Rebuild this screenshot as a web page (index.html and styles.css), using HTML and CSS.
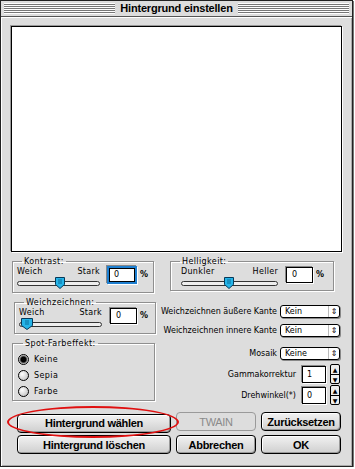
FILE: index.html
```html
<!DOCTYPE html>
<html>
<head>
  <link rel="stylesheet" href="styles.css">
</head>
<body>

  <div class="window">
    <div class="titlebar">
      <div class="stripes"><span class="title">Hintergrund einstellen</span></div>
    </div>

    <div class="content">
      <div class="preview"></div>

      <div class="controls">
        <div class="col-left">
          <fieldset class="group kontrast">
            <legend>Kontrast:</legend>
            <div class="slider-row">
              <div class="slider">
                <div class="slider-labels"><span>Weich</span><span>Stark</span></div>
                <div class="track">
                  <svg class="thumb" style="left: 37px" width="10" height="12" viewBox="0 0 10 12">
                    <path d="M0.5 0.5h9v7l-4.5 4-4.5-4z" fill="#25b4e8" stroke="#063a5a"/>
                    <path d="M4 2v5M6 2v5" stroke="#0a6f9c"/>
                  </svg>
                </div>
              </div>
              <div class="num focused">0</div>
              <span class="pct">%</span>
            </div>
          </fieldset>

          <fieldset class="group weich">
            <legend>Weichzeichnen:</legend>
            <div class="slider-row">
              <div class="slider">
                <div class="slider-labels"><span>Weich</span><span>Stark</span></div>
                <div class="track">
                  <svg class="thumb" style="left: 1px" width="12" height="12" viewBox="0 0 12 12">
                    <path d="M0.5 0.5h11v7l-5.5 4-5.5-4z" fill="#25b4e8" stroke="#063a5a"/>
                    <path d="M5 2v5M7 2v5" stroke="#0a6f9c"/>
                  </svg>
                </div>
              </div>
              <div class="num">0</div>
              <span class="pct">%</span>
            </div>
          </fieldset>

          <fieldset class="group spot">
            <legend>Spot-Farbeffekt:</legend>
            <label class="radio"><span class="dot checked"></span>Keine</label>
            <label class="radio"><span class="dot"></span>Sepia</label>
            <label class="radio"><span class="dot"></span>Farbe</label>
          </fieldset>
        </div>

        <div class="col-right">
          <fieldset class="group hell">
            <legend>Helligkeit:</legend>
            <div class="slider-row">
              <div class="slider wide">
                <div class="slider-labels"><span>Dunkler</span><span>Heller</span></div>
                <div class="track">
                  <svg class="thumb" style="left: 42px" width="10" height="12" viewBox="0 0 10 12">
                    <path d="M0.5 0.5h9v7l-4.5 4-4.5-4z" fill="#25b4e8" stroke="#063a5a"/>
                    <path d="M4 2v5M6 2v5" stroke="#0a6f9c"/>
                  </svg>
                </div>
              </div>
              <div class="num">0</div>
              <span class="pct">%</span>
            </div>
          </fieldset>

          <div class="row row-aussen">
            <span class="lbl">Weichzeichnen äußere Kante</span>
            <div class="popup"><span>Kein</span><span class="arrows">&#8661;</span></div>
          </div>
          <div class="row row-innen">
            <span class="lbl">Weichzeichnen innere Kante</span>
            <div class="popup"><span>Kein</span><span class="arrows">&#8661;</span></div>
          </div>
          <div class="row row-mosaik">
            <span class="lbl">Mosaik</span>
            <div class="popup"><span>Keine</span><span class="arrows">&#8661;</span></div>
          </div>
          <div class="row row-gamma">
            <span class="lbl">Gammakorrektur</span>
            <div class="num field">1</div>
            <div class="spinner"><span>&#9650;</span><span>&#9660;</span></div>
          </div>
          <div class="row row-dreh">
            <span class="lbl">Drehwinkel(*)</span>
            <div class="num field">0</div>
            <div class="spinner"><span>&#9650;</span><span>&#9660;</span></div>
          </div>
        </div>
      </div>

      <div class="buttons">
        <div class="marked">
          <button class="btn">Hintergrund wählen</button>
          <span class="circle"></span>
        </div>
        <button class="btn disabled">TWAIN</button>
        <button class="btn">Zurücksetzen</button>
        <button class="btn">Hintergrund löschen</button>
        <button class="btn">Abbrechen</button>
        <button class="btn">OK</button>
      </div>
    </div>
  </div>

</body>
</html>
```

FILE: styles.css
```css
body {
  margin: 0;
  background: #ffffff;
  font-family: 'DejaVu Sans', Verdana, sans-serif;
  color: #000;
}

.window {
  width: 351px;
  height: 465px;
  border: 1px solid #222;
  background: #dddddd;
  box-shadow: 1px 1px 0 #777;
}

.titlebar {
  height: 15px;
  padding: 0 3px;
  border-bottom: 1px solid #555;
  background: #dddddd;
  display: flex;
  align-items: center;
}

.stripes {
  flex: 1;
  height: 11px;
  background: repeating-linear-gradient(to bottom, #ffffff 0px, #ffffff 1px, #777777 1px, #777777 2px);
  display: flex;
  justify-content: center;
  align-items: center;
}

.title {
  background: #dddddd;
  padding: 0 5px;
  font-family: 'Liberation Sans', Arial, sans-serif;
  font-weight: bold;
  font-size: 11px;
  letter-spacing: -0.2px;
  line-height: 13px;
}

.content {
  height: 449px;
  padding: 9px 0 0 10px;
  box-shadow: inset 1px 1px 0 #fff, inset -1px -1px 0 #aaa;
  box-sizing: border-box;
}

.preview {
  width: 329px;
  height: 224px;
  background: #fff;
  border: 1px solid #000;
  box-shadow: 1px 1px 0 #fff, -1px -1px 0 #999;
}

.controls {
  display: grid;
  grid-template-columns: 145px 185px;
  margin-top: 4px;
  font-size: 8px;
}

.group {
  margin: 0;
  padding: 0 4px 0 4px;
  border: 1px solid #8f8f8f;
  box-shadow: inset 1px 1px 0 #fff, 1px 1px 0 #fff;
  min-width: 0;
}

.group legend {
  padding: 0 2px;
  margin-left: 5px;
  font-size: 8px;
  line-height: 11px;
  letter-spacing: 0.4px;
}

.kontrast {
  margin-left: 1px;
  width: 142px;
  height: 37px;
  box-sizing: border-box;
}

.weich {
  margin-top: 4px;
  margin-left: 3px;
  width: 142px;
  height: 37px;
  box-sizing: border-box;
}

.spot {
  margin-top: 4px;
  margin-left: 1px;
  width: 143px;
  height: 63px;
  box-sizing: border-box;
  padding: 2px 4px 0 5px;
}

.hell {
  margin-left: 14px;
  width: 164px;
  height: 35px;
  box-sizing: border-box;
}

.slider-row {
  display: flex;
  align-items: flex-start;
}

.slider {
  width: 83px;
}

.slider.wide {
  width: 97px;
  margin-left: 6px;
}

.slider-labels {
  display: flex;
  justify-content: space-between;
  line-height: 10px;
  letter-spacing: 0.3px;
}

.track {
  position: relative;
  height: 3px;
  margin-top: 4px;
  border: 1px solid #333;
  border-radius: 3px;
  background: #eeeeee;
}

.thumb {
  position: absolute;
  top: -5px;
}

.num {
  width: 27px;
  height: 16px;
  margin: 0 0 0 8px;
  border: 1px solid #000;
  background: #fff;
  box-sizing: border-box;
  font-size: 8px;
  line-height: 14px;
  padding-left: 5px;
  box-shadow: -1px -1px 0 #888, 1px 1px 0 #fff;
}

.num.focused {
  border: 2px solid #1e7fd0;
  outline: 1px solid #000;
  outline-offset: -3px;
  width: 30px;
  height: 18px;
  margin-top: -1px;
  margin-left: 7px;
  line-height: 14px;
}

.pct {
  margin-left: 3px;
  margin-top: 3px;
  font-weight: bold;
}

.radio {
  display: flex;
  align-items: center;
  height: 16px;
  letter-spacing: 0.4px;
}

.dot {
  width: 9px;
  height: 9px;
  border: 1px solid #000;
  border-radius: 50%;
  margin-right: 5px;
  background: radial-gradient(circle at 35% 35%, #ffffff, #b8b8b8);
}

.dot.checked {
  background: radial-gradient(circle, #000 0, #000 2.5px, #777 3.5px, #ddd 4.5px);
}

.row {
  display: flex;
  justify-content: flex-end;
  align-items: center;
  padding-right: 1px;
  letter-spacing: 0;
}

.row .lbl {
  white-space: nowrap;
}

.row-aussen { margin-top: 14px; margin-left: -10px; }
.row-innen { margin-top: 6px; margin-left: -10px; }
.row-mosaik { margin-top: 10px; }
.row-gamma { margin-top: 4px; height: 20px; }
.row-dreh { margin-top: 1px; height: 20px; }

.popup {
  width: 60px;
  height: 13px;
  margin-left: 3px;
  border: 1px solid #000;
  border-radius: 3px;
  background: #fff;
  box-sizing: border-box;
  display: flex;
  justify-content: space-between;
  align-items: center;
  padding-left: 4px;
  font-size: 8px;
  box-shadow: 1px 1px 0 #888;
}

.popup .arrows {
  width: 10px;
  border-left: 1px solid #bbb;
  text-align: center;
  font-size: 8px;
  line-height: 11px;
}

.num.field {
  width: 24px;
  height: 17px;
  margin-left: 6px;
  padding-left: 4px;
  line-height: 15px;
}

.spinner {
  width: 10px;
  height: 20px;
  margin-left: 4px;
  border: 1px solid #000;
  border-radius: 2px;
  box-sizing: border-box;
  background: #eee;
  display: flex;
  flex-direction: column;
  font-size: 6px;
  line-height: 9px;
  text-align: center;
}

.spinner span + span {
  border-top: 1px solid #000;
}

.buttons {
  display: grid;
  grid-template-columns: 154px 80px 80px;
  grid-auto-rows: 19px;
  column-gap: 5px;
  row-gap: 4px;
  margin-top: 7px;
  margin-left: 6px;
}

.marked {
  position: relative;
}

.btn {
  width: 100%;
  height: 19px;
  padding: 0;
  border: 1px solid #000;
  border-radius: 4px;
  background: linear-gradient(to bottom, #f2f2f2, #cfcfcf);
  box-shadow: inset 1px 1px 0 #fff, inset -1px -1px 0 #999;
  font-family: 'Liberation Sans', Arial, sans-serif;
  font-weight: bold;
  font-size: 11px;
  color: #000;
  letter-spacing: -0.3px;
}

.btn.disabled {
  border-color: #9a9a9a;
  color: #8a8a8a;
  background: #dddddd;
  box-shadow: none;
  font-weight: normal;
}

.circle {
  position: absolute;
  left: -10px;
  top: -6px;
  width: 168px;
  height: 28px;
  border: 2px solid #e01010;
  border-radius: 50%;
  pointer-events: none;
}
```
